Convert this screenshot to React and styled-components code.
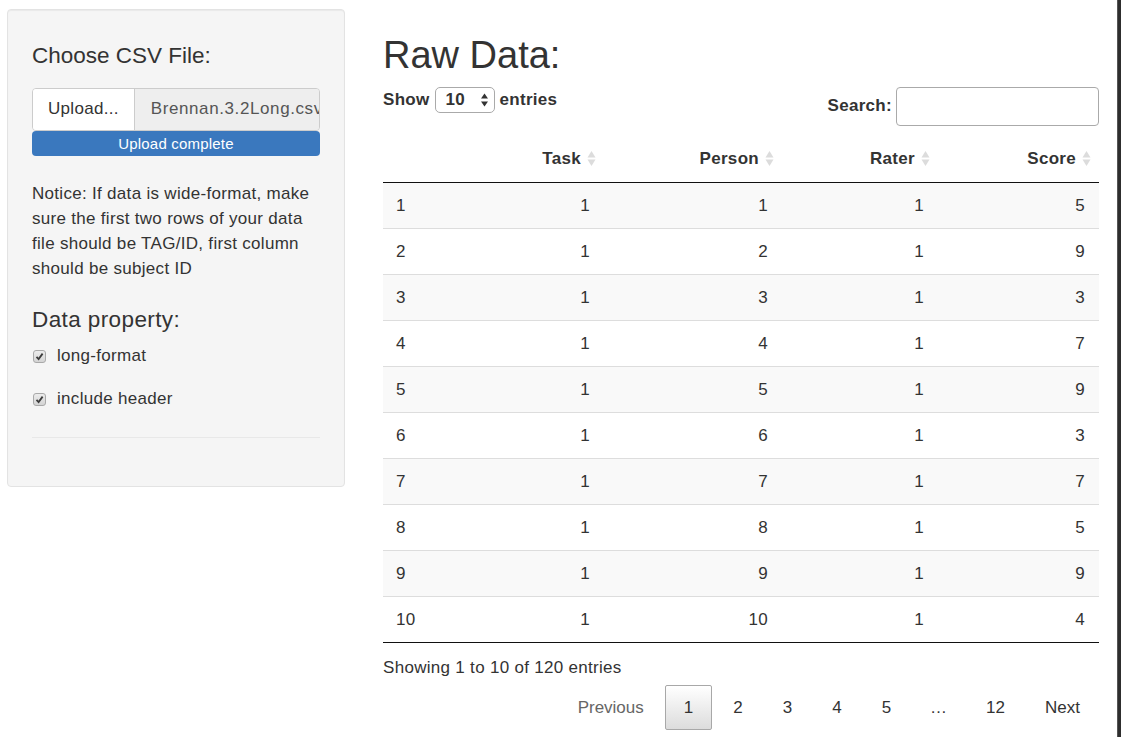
import React from 'react';
import styled, { createGlobalStyle } from 'styled-components';

const GlobalStyle = createGlobalStyle`
    body {
        margin: 0;
        background: #fff;
        color: #333;
        font-family: "Liberation Sans", Helvetica, Arial, sans-serif;
        font-size: 17px;
        letter-spacing: 0.3px;
    }
`;

const Page = styled.div`
    display: flex;
    height: 737px;
    overflow: hidden;
`;

const Content = styled.div`
    flex: 1;
    display: flex;
    align-items: flex-start;
    gap: 38px;
    padding: 9px 0 0 7px;
`;

const EdgeStrip = styled.div`
    width: 3px;
    background: #2e2e2e;
    border-left: 1px solid #555;
`;

const Well = styled.div`
    width: 338px;
    height: 478px;
    box-sizing: border-box;
    padding: 24px 24px 0;
    background: #f5f5f5;
    border: 1px solid #e3e3e3;
    border-radius: 4px;
    box-shadow: inset 0 1px 1px rgba(0, 0, 0, .05);
`;

const SideTitle = styled.h3`
    margin: ${props => props.top || 0}px 0 0;
    font-size: 22.5px;
    font-weight: 500;
    line-height: 1.1;
    letter-spacing: ${props => props.spread || 0}px;
    color: #333;
`;

const FileGroup = styled.div`
    display: flex;
    height: 43px;
    margin-top: 19px;
    box-sizing: border-box;
    border: 1px solid #ccc;
    border-radius: 4px;
    overflow: hidden;
`;

const BrowseButton = styled.span`
    display: flex;
    align-items: center;
    padding: 0 15px;
    background: #fff;
    border-right: 1px solid #ccc;
    white-space: nowrap;
`;

const FileName = styled.span`
    flex: 1;
    display: flex;
    align-items: center;
    padding: 0 0 0 16px;
    background: #eee;
    color: #555;
    letter-spacing: 0.6px;
    white-space: nowrap;
    overflow: hidden;
`;

const ProgressBar = styled.div`
    height: 25px;
    background: #3a78be;
    border-radius: 4px;
    color: #fff;
    font-size: 15px;
    line-height: 25px;
    letter-spacing: 0.2px;
    text-align: center;
`;

const Notice = styled.p`
    margin: 25px 0 0;
    line-height: 25px;
`;

const CheckRow = styled.label`
    display: flex;
    align-items: center;
    gap: 11px;
    height: 21px;
    margin-top: ${props => props.top}px;
    padding-left: 1px;
`;

const CheckBox = styled.span`
    width: 13px;
    height: 13px;
    box-sizing: border-box;
    border: 1px solid #a9a9a9;
    border-radius: 3px;
    background: linear-gradient(#ececec, #d4d4d4);
    display: flex;
    align-items: center;
    justify-content: center;
`;

const Rule = styled.hr`
    margin: 27px 0 0;
    border: 0;
    border-top: 1px solid #e8e8e8;
`;

const Main = styled.div`
    width: 716px;
`;

const Title = styled.h1`
    margin: 26px 0 0;
    font-size: 38px;
    font-weight: 500;
    line-height: 1.1;
    letter-spacing: 0;
`;

const Controls = styled.div`
    display: flex;
    justify-content: space-between;
    align-items: flex-start;
    margin-top: 10px;
`;

const ControlLabel = styled.div`
    display: flex;
    align-items: center;
    gap: ${props => props.spacing}px;
    font-weight: bold;
    height: ${props => props.h}px;
`;

const LengthSelect = styled.span`
    display: flex;
    align-items: center;
    justify-content: space-between;
    width: 60px;
    height: 26px;
    box-sizing: border-box;
    padding: 0 5px 0 10px;
    border: 1px solid #aaa;
    border-radius: 5px;
    background: #fff;
    font-weight: bold;
`;

const SearchInput = styled.input`
    width: 203px;
    height: 39px;
    box-sizing: border-box;
    margin: 0;
    border: 1px solid #aaa;
    border-radius: 4px;
    font: inherit;
`;

const Table = styled.table`
    width: 100%;
    margin-top: 8px;
    border-collapse: separate;
    border-spacing: 0;
    table-layout: fixed;
    border-bottom: 1px solid #111;
`;

const HeadCell = styled.th`
    padding: 15px 8px 13px 0;
    line-height: 20px;
    text-align: right;
    font-weight: bold;
    border-bottom: 1px solid #111;
    white-space: nowrap;
    vertical-align: middle;
`;

const Row = styled.tr`
    background: ${props => props.odd ? '#f9f9f9' : '#fff'};
`;

const Cell = styled.td`
    height: 45px;
    box-sizing: content-box;
    padding: 0 14px 0 ${props => props.first ? 13 : 0}px;
    line-height: 21px;
    border-top: ${props => props.divided ? '1px solid #ddd' : '0'};
    text-align: ${props => props.first ? 'left' : 'right'};
`;

const Info = styled.div`
    margin-top: 15px;
    line-height: 20px;
`;

const Pager = styled.div`
    display: flex;
    justify-content: flex-end;
    margin-top: 7px;
    letter-spacing: 0;
`;

const PageButton = styled.span`
    height: 45px;
    box-sizing: border-box;
    margin-left: 2px;
    padding: 0 ${props => props.gap ? 17 : 18}px;
    line-height: 43px;
    border: 1px solid ${props => props.current ? '#a8a8a8' : 'transparent'};
    border-radius: 2px;
    background: ${props => props.current ? 'linear-gradient(#fff, #dcdcdc)' : 'transparent'};
    color: ${props => props.disabled ? '#666' : '#333'};
`;

const SortIcon = () => (
    <svg width="9" height="17" viewBox="0 0 9 17" style={{ marginLeft: 6, verticalAlign: -3 }}>
        <polygon points="4.5,1 8.5,7.5 0.5,7.5" fill="#dcdcdc"/>
        <polygon points="0.5,9.5 8.5,9.5 4.5,16" fill="#dcdcdc"/>
    </svg>
);

const SelectArrows = () => (
    <svg width="9" height="16" viewBox="0 0 9 16">
        <polygon points="4.5,1.5 8,6.5 1,6.5" fill="#333"/>
        <polygon points="1,9.5 8,9.5 4.5,14.5" fill="#333"/>
    </svg>
);

const Check = () => (
    <svg width="9" height="9" viewBox="0 0 9 9">
        <path d="M1.5 4.8 L3.6 7 L7.6 1.6" fill="none" stroke="#3c3c3c" strokeWidth="1.8"/>
    </svg>
);

const rows = [
    [1, 1, 1, 1, 5], [2, 1, 2, 1, 9], [3, 1, 3, 1, 3], [4, 1, 4, 1, 7], [5, 1, 5, 1, 9],
    [6, 1, 6, 1, 3], [7, 1, 7, 1, 7], [8, 1, 8, 1, 5], [9, 1, 9, 1, 9], [10, 1, 10, 1, 4],
];

const columns = ['Task', 'Person', 'Rater', 'Score'];
const widths = [95, 126, 178, 156, 161];
const pages = ['1', '2', '3', '4', '5'];

export default function App() {
    return (
        <Page>
            <GlobalStyle/>
            <Content>
                <Well>
                    <SideTitle top={10}>Choose CSV File:</SideTitle>
                    <FileGroup>
                        <BrowseButton>Upload...</BrowseButton>
                        <FileName>Brennan.3.2Long.csv</FileName>
                    </FileGroup>
                    <ProgressBar>Upload complete</ProgressBar>
                    <Notice>
                        Notice: If data is wide-format, make sure the first two rows of your data
                        file should be TAG/ID, first column should be subject ID
                    </Notice>
                    <SideTitle top={27} spread={0.4}>Data property:</SideTitle>
                    <CheckRow top={13}><CheckBox><Check/></CheckBox>long-format</CheckRow>
                    <CheckRow top={22}><CheckBox><Check/></CheckBox>include header</CheckRow>
                    <Rule/>
                </Well>

                <Main>
                    <Title>Raw Data:</Title>
                    <Controls>
                        <ControlLabel h={26} spacing={5}>
                            Show
                            <LengthSelect>10<SelectArrows/></LengthSelect>
                            entries
                        </ControlLabel>
                        <ControlLabel h={39} spacing={4}>
                            Search:
                            <SearchInput type="search"/>
                        </ControlLabel>
                    </Controls>

                    <Table>
                        <colgroup>
                            {widths.map((w, i) => <col key={i} style={{ width: w }}/>)}
                        </colgroup>
                        <thead>
                            <tr>
                                <HeadCell/>
                                {columns.map(c => (
                                    <HeadCell key={c}>{c}<SortIcon/></HeadCell>
                                ))}
                            </tr>
                        </thead>
                        <tbody>
                            {rows.map((r, i) => (
                                <Row key={i} odd={i % 2 === 0}>
                                    {r.map((v, j) => (
                                        <Cell key={j} first={j === 0} divided={i > 0}>{v}</Cell>
                                    ))}
                                </Row>
                            ))}
                        </tbody>
                    </Table>

                    <Info>Showing 1 to 10 of 120 entries</Info>
                    <Pager>
                        <PageButton disabled>Previous</PageButton>
                        {pages.map(p => <PageButton key={p} current={p === '1'}>{p}</PageButton>)}
                        <PageButton gap>…</PageButton>
                        <PageButton>12</PageButton>
                        <PageButton>Next</PageButton>
                    </Pager>
                </Main>
            </Content>
            <EdgeStrip/>
        </Page>
    );
}
